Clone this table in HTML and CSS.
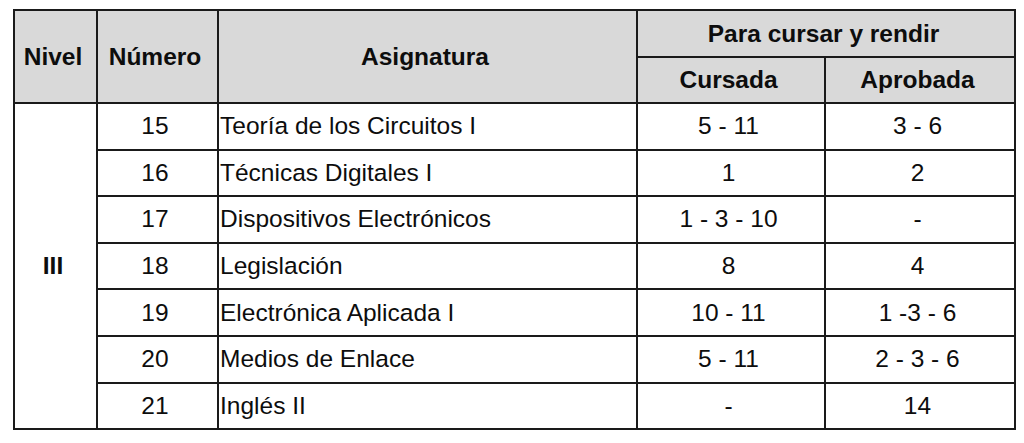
FILE: index.html
```html
<!DOCTYPE html>
<html lang="es">
<head>
<meta charset="utf-8">
<title>Correlatividades Nivel III</title>
<link rel="stylesheet" href="styles.css">
</head>
<body>
<table class="grid">
  <colgroup>
    <col class="c-nivel">
    <col class="c-num">
    <col class="c-asig">
    <col class="c-curs">
    <col class="c-apro">
  </colgroup>
  <thead>
    <tr class="h1">
      <th rowspan="2">Nivel</th>
      <th rowspan="2">Número</th>
      <th rowspan="2">Asignatura</th>
      <th colspan="2">Para cursar y rendir</th>
    </tr>
    <tr class="h2">
      <th>Cursada</th>
      <th>Aprobada</th>
    </tr>
  </thead>
  <tbody>
    <tr>
      <td rowspan="7" class="nivel">III</td>
      <td>15</td><td class="asig">Teoría de los Circuitos I</td><td>5 - 11</td><td>3 - 6</td>
    </tr>
    <tr><td>16</td><td class="asig">Técnicas Digitales I</td><td>1</td><td>2</td></tr>
    <tr><td>17</td><td class="asig">Dispositivos Electrónicos</td><td>1 - 3 - 10</td><td>-</td></tr>
    <tr><td>18</td><td class="asig">Legislación</td><td>8</td><td>4</td></tr>
    <tr><td>19</td><td class="asig">Electrónica Aplicada I</td><td>10 - 11</td><td>1 -3 - 6</td></tr>
    <tr><td>20</td><td class="asig">Medios de Enlace</td><td>5 - 11</td><td>2 - 3 - 6</td></tr>
    <tr><td>21</td><td class="asig">Inglés II</td><td>-</td><td>14</td></tr>
  </tbody>
</table>
</body>
</html>
```
FILE: styles.css
```css
html, body {
  margin: 0;
  background: #ffffff;
}
body {
  padding: 9px 0 0 13px;
  font-family: "Liberation Sans", Arial, sans-serif;
  color: #0d0d0d;
}
.grid {
  border-collapse: collapse;
  table-layout: fixed;
  width: 1001px;
}
.c-nivel { width: 83px; }
.c-num { width: 121px; }
.c-asig { width: 419px; }
.c-curs { width: 188px; }
.c-apro { width: 190px; }
.grid th, .grid td {
  border: 2px solid #1a1a1a;
  padding: 0 5px 0 0;
  text-align: center;
  vertical-align: middle;
  font-size: 24.5px;
  line-height: 28px;
}
.grid th {
  background: #d9d9d9;
  font-weight: bold;
}
.h1 th { height: 45px; }
.h2 th { height: 44px; }
.grid tbody td { height: 44.6px; }
.grid td.asig {
  text-align: left;
  padding: 0 0 0 1px;
}
.grid td.nivel {
  font-weight: bold;
}
```
